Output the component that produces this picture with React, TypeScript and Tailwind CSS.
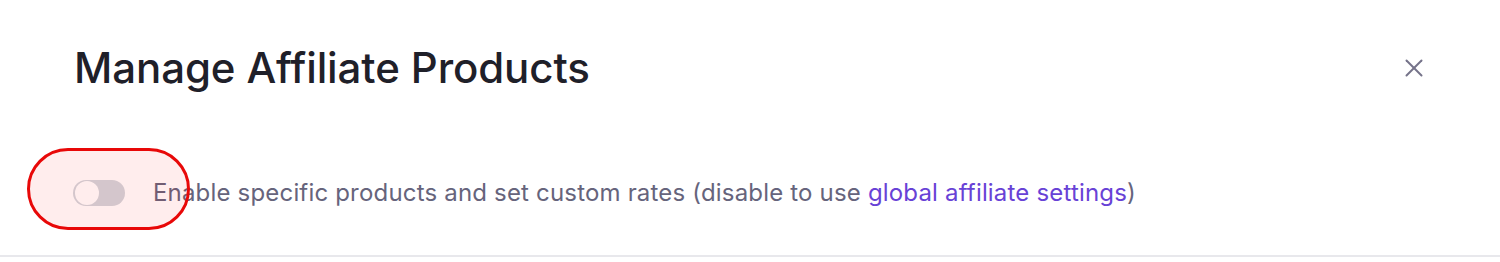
import { X } from "lucide-react";

export default function App() {
    return (
        <div className="relative w-full h-[262px] bg-white overflow-hidden" style={{ fontFamily: "Inter, 'Noto Sans', sans-serif" }}>
            <div className="border-b-2 border-[#e8e8ec] pt-[30px] pb-[42px]">
                {/* Header */}
                <div className="flex items-center justify-between h-[75px] pl-[74px] pr-[70px]">
                    <h1 className="text-[42px] leading-none font-medium text-[#1f2029] tracking-[-0.1px]">
                        Manage Affiliate Products
                    </h1>
                    <button className="w-[32px] h-[32px] flex items-center justify-center text-[#75738a]">
                        <X size={30} strokeWidth={1.6} />
                    </button>
                </div>

                {/* Toggle row */}
                <div className="flex items-center gap-[28px] h-[40px] mt-[68px] pl-[73px]">
                    <div className="w-[52px] h-[26px] rounded-full bg-[#d1d5db] p-[2px] flex items-center shrink-0">
                        <div className="w-[24px] h-[24px] rounded-full bg-white" />
                    </div>
                    <p className="text-[24px] leading-none tracking-[0.18px] text-[#66647c]">
                        Enable specific products and set custom rates (disable to use{" "}
                        <a className="text-[#6842d6]">global affiliate settings</a>)
                    </p>
                </div>
            </div>

            {/* annotation */}
            <div className="absolute left-[27px] top-[148px] w-[163px] h-[82px] rounded-full border-[3px] border-[#e80808] bg-[#ff0000]/[0.07] pointer-events-none" />
        </div>
    );
}
